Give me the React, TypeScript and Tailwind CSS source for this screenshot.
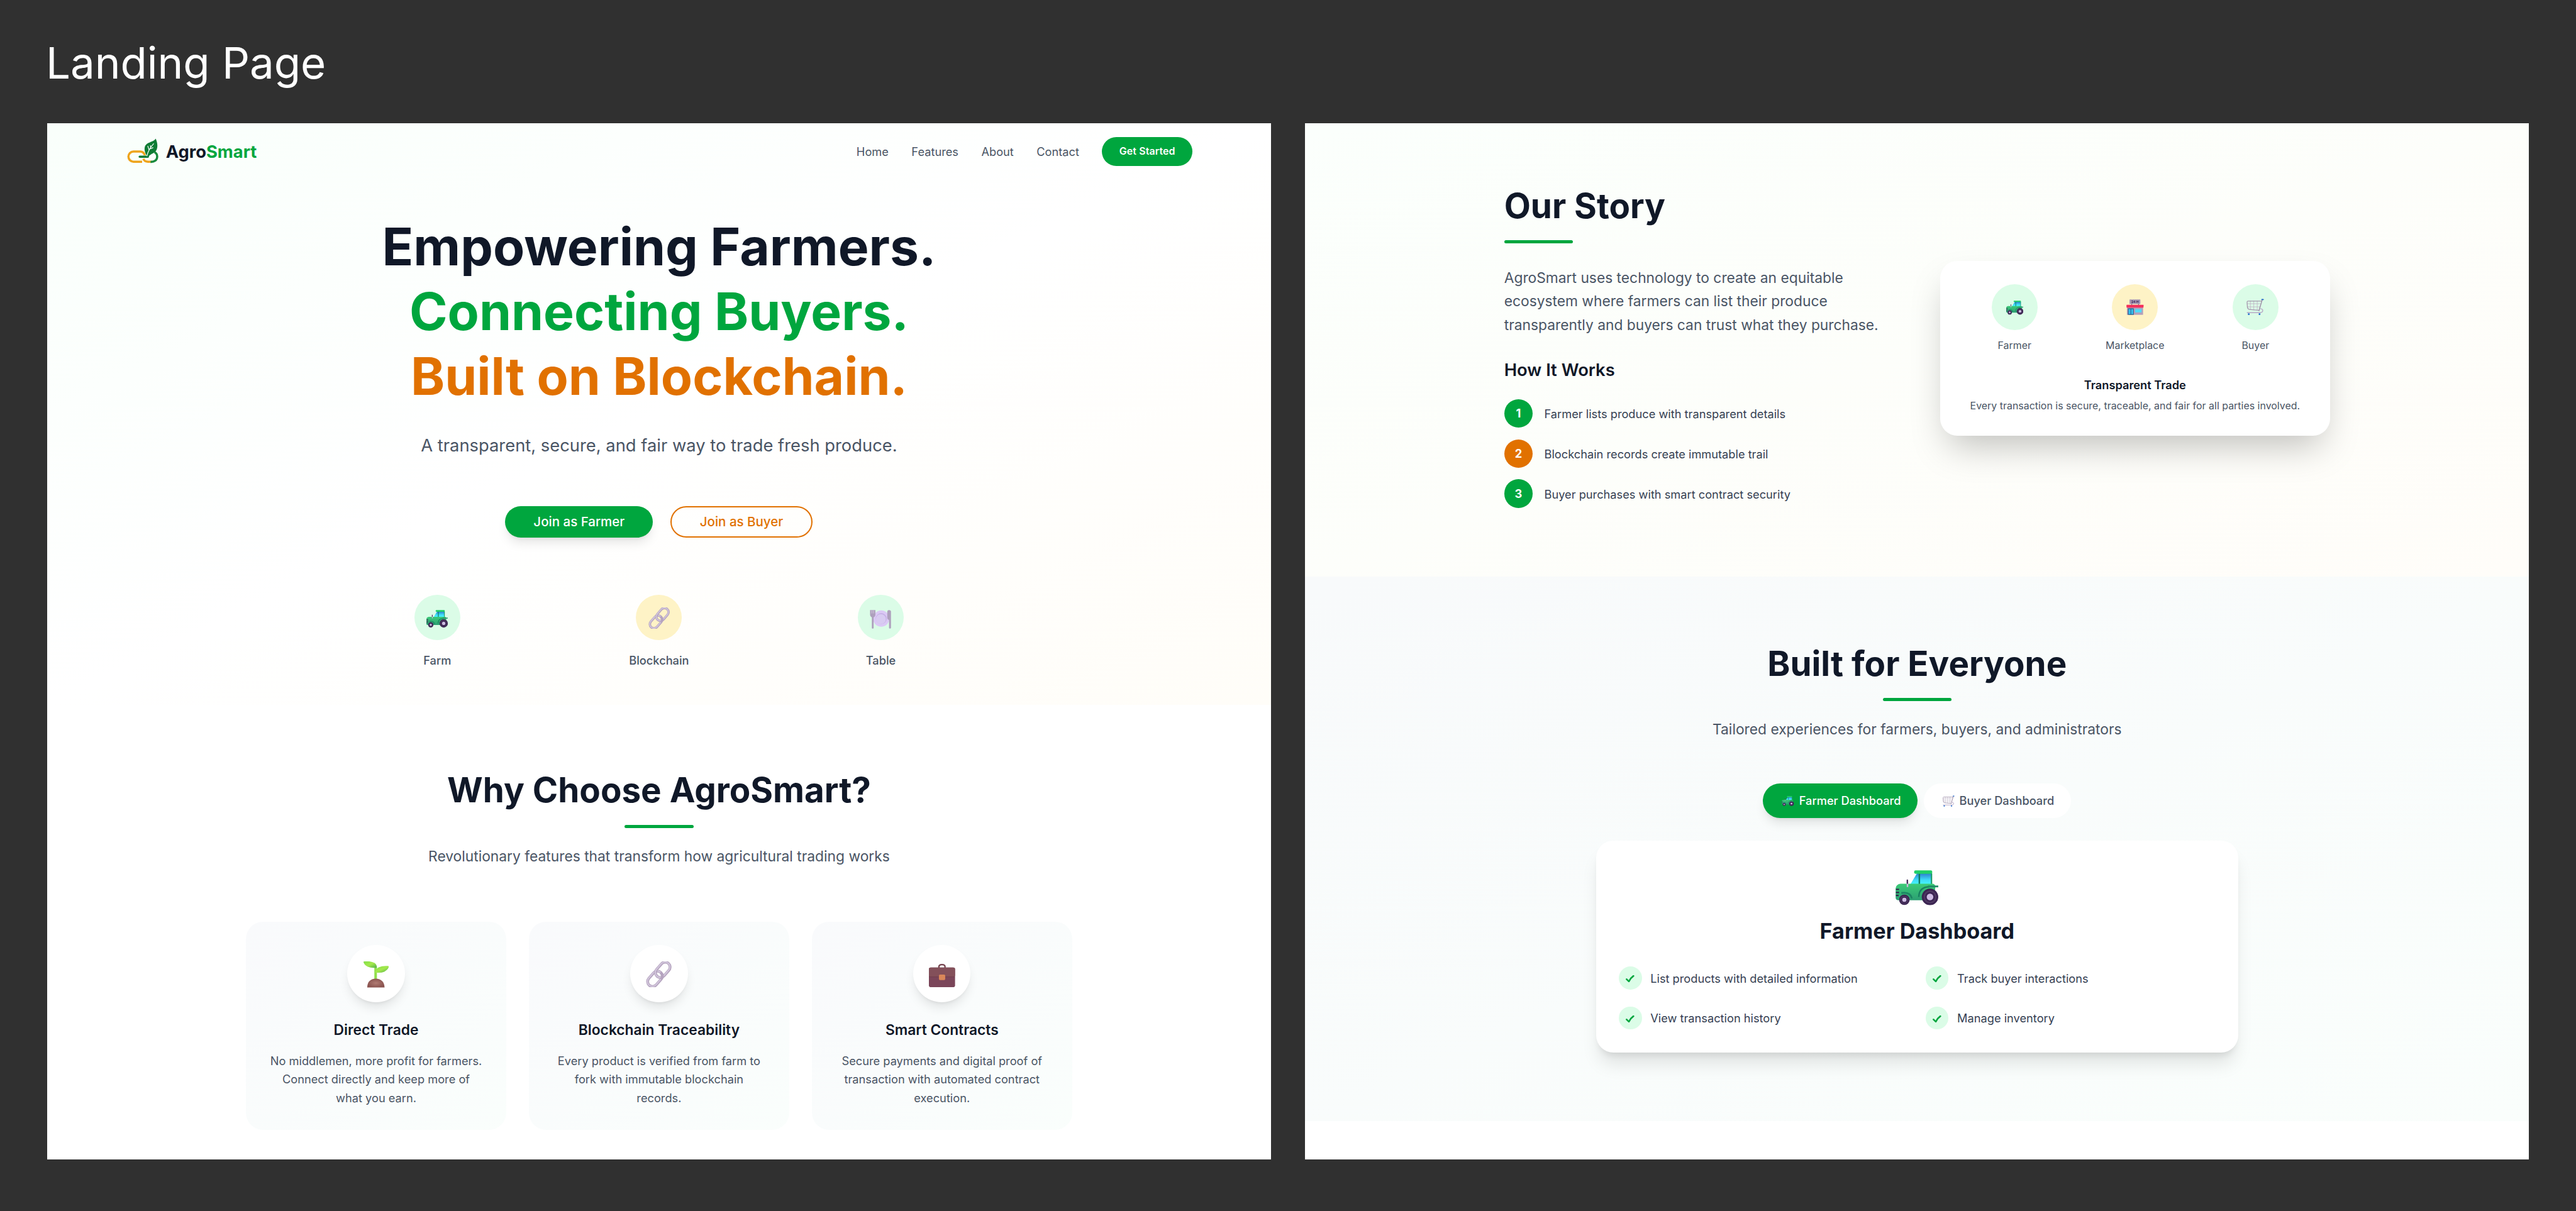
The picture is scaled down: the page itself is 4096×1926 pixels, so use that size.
import React from "react";

type IconProps = { className?: string };

function Tractor({ className }: IconProps) {
  return (
    <svg viewBox="64 74 285 234" className={className} aria-hidden="true">
      <defs>
        <linearGradient id="tr-glass" x1="0" y1="0" x2="0" y2="1">
          <stop offset="0" stopColor="#2c7fd0" />
          <stop offset="0.6" stopColor="#3fdcf8" />
          <stop offset="1" stopColor="#46f5ff" />
        </linearGradient>
        <linearGradient id="tr-body" x1="0" y1="0" x2="0" y2="1">
          <stop offset="0" stopColor="#3ccb78" />
          <stop offset="1" stopColor="#2b9f72" />
        </linearGradient>
      </defs>
      <path d="M206 95H305V168H162Z" fill="url(#tr-glass)" />
      <path d="M222 95V170" stroke="#10795f" strokeWidth="10" />
      <path d="M303 95V170" stroke="#189a66" strokeWidth="9" />
      <rect x="187" y="75" width="121" height="23" rx="10" fill="#20cf68" />
      <path d="M96 164H308Q330 164 328 190L322 240L250 274H80Q64 272 64 256V196Q66 168 96 164Z" fill="url(#tr-body)" />
      <path d="M218 252Q220 186 290 184" fill="none" stroke="#187f60" strokeWidth="10" />
      <path d="M280 182H348" stroke="#1f8c66" strokeWidth="12" />
      <path d="M102 226Q162 216 172 262" fill="none" stroke="#1c8563" strokeWidth="12" />
      <path d="M66 202H87M66 222H87M66 242H84" stroke="#33204a" strokeWidth="9" />
      <path d="M143 150V186" stroke="#cdb9dc" strokeWidth="10" />
      <path d="M142 141V160" stroke="#49305f" strokeWidth="10" strokeLinecap="round" />
      <circle cx="293" cy="252" r="55" fill="#3b2452" />
      <circle cx="293" cy="252" r="38" fill="none" stroke="#4f3a62" strokeWidth="9" />
      <circle cx="293" cy="252" r="22" fill="#cdbbe2" />
      <circle cx="122" cy="271" r="35" fill="#3b2452" />
      <circle cx="122" cy="271" r="24" fill="none" stroke="#4f3a62" strokeWidth="5" />
      <circle cx="122" cy="271" r="14" fill="#cdbbe2" />
    </svg>
  );
}

function ChainLink({ className }: IconProps) {
  return (
    <svg viewBox="0 0 30 30" className={className} aria-hidden="true">
      <g transform="rotate(-49 15 15)" fill="none">
        <rect x="-1.9" y="9.4" width="20" height="11.4" rx="5.7" stroke="#b5a4bf" strokeWidth="3.3" />
        <rect x="-1.9" y="9.1" width="20" height="11.4" rx="5.7" stroke="#d2c6dc" strokeWidth="1.5" />
        <rect x="11.9" y="9.4" width="20" height="11.4" rx="5.7" stroke="#b5a4bf" strokeWidth="3.3" />
        <rect x="11.9" y="9.1" width="20" height="11.4" rx="5.7" stroke="#d2c6dc" strokeWidth="1.5" />
        <path d="M12.4 20.700Q18.100 20.700 18.100 15" stroke="#b5a4bf" strokeWidth="3" />
      </g>
    </svg>
  );
}

function Plate({ className }: IconProps) {
  return (
    <svg viewBox="0 0 60 54" className={className} aria-hidden="true">
      <circle cx="32" cy="24.5" r="23" fill="#dbc9f5" />
      <circle cx="32" cy="24.5" r="15.5" fill="#c6b0e6" />
      <circle cx="31" cy="26" r="14" fill="#d8cbf1" />
      <path d="M0.5 0.5H15.5V14Q15.5 19 10.5 21.5V51.5Q8 54.500 5.500 51.500V21.500Q0.500 19 0.500 14Z" fill="#aea0bd" />
      <path d="M5.500 1V10M10.500 1V10" stroke="#d9cfe4" strokeWidth="1.500" />
      <path d="M54 0.500Q59.500 0.500 59.500 5V51Q57 54.500 54 51.500V28Q49 28 49 20V6Q49 0.500 54 0.500Z" fill="#aea0bd" />
    </svg>
  );
}

function Sprout({ className }: IconProps) {
  return (
    <svg viewBox="475 786 90 97" preserveAspectRatio="none" className={className} aria-hidden="true">
      <defs>
        <linearGradient id="sp-leaf" x1="0" y1="0" x2="1" y2="1">
          <stop offset="0" stopColor="#7fe04a" />
          <stop offset="0.500" stopColor="#a5e84c" />
          <stop offset="1" stopColor="#4fae4c" />
        </linearGradient>
        <radialGradient id="sp-soil">
          <stop offset="0" stopColor="#b07a72" />
          <stop offset="1" stopColor="#8b5450" />
        </radialGradient>
      </defs>
      <path d="M513 808H522V854H513Z" fill="#90df4b" />
      <path d="M475 789Q474 786 479 786Q501 784 514 792Q522 798 522 809Q503 812 490 806Q477 799 475 789Z" fill="url(#sp-leaf)" />
      <path d="M564 806Q566 803 560 803Q541 802 528 808Q517 814 516 827Q537 829 548 824Q561 817 564 806Z" fill="url(#sp-leaf)" />
      <path d="M488 882Q489 851 518 850Q547 851 549 882Z" fill="url(#sp-soil)" />
    </svg>
  );
}

function Briefcase({ className }: IconProps) {
  return (
    <svg viewBox="0 0 73 65" className={className} aria-hidden="true">
      <path d="M28 12V8Q28 2 36.500 2Q45 2 45 8V12" fill="none" stroke="#74424d" strokeWidth="4" />
      <rect x="0" y="10" width="73" height="55" rx="5" fill="#7a4559" />
      <path d="M5 10H68Q73 10 73 15V33Q71 37 66 37H7Q2 37 0 33V15Q0 10 5 10Z" fill="#83505a" />
      <path d="M1 36H72" stroke="#6f3d4c" strokeWidth="1.500" />
      <rect x="28" y="30" width="17.500" height="15" rx="3" fill="#d98659" />
    </svg>
  );
}

function Shop({ className }: IconProps) {
  return (
    <svg viewBox="95 95 115 104" className={className} aria-hidden="true">
      <path d="M131 124V134M176 124V134" stroke="#6b5777" strokeWidth="5" />
      <rect x="116" y="96" width="72" height="30" rx="3" fill="#a796b5" />
      <text x="152" y="119" textAnchor="middle" fontSize="22" fontWeight="700" fontFamily="Inter, sans-serif" fill="#3e2658">
        24 H
      </text>
      <rect x="99" y="146" width="107" height="52" fill="#b3a1bb" />
      <rect x="96" y="131" width="113" height="19" rx="3" fill="#f5305a" />
      <rect x="106" y="155" width="38" height="43" fill="#28507c" />
      <path d="M110 160H123V194H110ZM127 160H140V194H127Z" fill="#35c3f3" />
      <rect x="153" y="160" width="43" height="22" fill="#4fdcfa" />
    </svg>
  );
}

function Cart({ className }: IconProps) {
  return (
    <svg viewBox="896 94 117 112" className={className} aria-hidden="true">
      <g fill="none" strokeLinecap="round">
        <path d="M922 110V168M945 110V170M968 110V172M900 128H990M900 149H985" stroke="#bfb2c5" strokeWidth="3.500" />
        <path d="M997 110H905Q899 111 900 120L903 154Q905 165 916 166L981 173" stroke="#a698ae" strokeWidth="5.500" />
        <path d="M1002 100L980 174" stroke="#9c8da5" strokeWidth="6" />
        <path d="M988 161Q1006 163 1005 174Q1004 187 990 188H901" stroke="#b7a8c6" strokeWidth="6" />
        <path d="M999 100H1009" stroke="#2168c8" strokeWidth="7" />
      </g>
      <rect x="906" y="192" width="11" height="12" rx="2" fill="#2870cf" />
      <rect x="978" y="192" width="11" height="12" rx="2" fill="#2870cf" />
    </svg>
  );
}

function Logo({ className }: IconProps) {
  return (
    <svg viewBox="58 50 209 165" className={className} aria-hidden="true">
      <g fill="none" strokeWidth="14.500">
        <path d="M176 162C170 145 160 138 146 138H100A33 33.500 0 0 0 100 205H158" stroke="#eea41c" />
        <path d="M166 186C172 200 182 205 196 205H222" stroke="#eea41c" />
        <path d="M214 206C240 207 258 194 258 172C258 158 252 148 240 142" stroke="#178a3c" />
        <path d="M142 172H196" stroke="#0f7a34" strokeLinecap="round" />
      </g>
      <path d="M248 52C262 82 264 116 248 136C235 151 214 153 197 175L184 158C170 128 170 100 190 86C212 72 236 72 248 52Z" fill="#0f7c35" />
      <path d="M190 166C196 140 208 114 234 86M203 124L196 102M206 122L230 112M214 110L213 98" fill="none" stroke="#fbfffc" strokeWidth="5" strokeLinecap="round" />
    </svg>
  );
}

function Tick() {
  return (
    <svg viewBox="0 0 12 10" className="mt-[3px] h-[10px] w-[12px]" aria-hidden="true">
      <path d="M1.200 5.600L4.400 8.700Q6.500 4 10.800 1" fill="none" stroke="#00a63e" strokeWidth="2.300" strokeLinejoin="round" strokeLinecap="round" />
    </svg>
  );
}

const navLinks = ["Home", "Features", "About", "Contact"];

const journey = [
  { label: "Farm", tint: "bg-green-100", icon: <Tractor className="mt-[3px] h-[24.8px] w-[30px]" /> },
  { label: "Blockchain", tint: "bg-amber-100", icon: <ChainLink className="mt-[2px] h-[30px] w-[30px]" /> },
  { label: "Table", tint: "bg-green-100", icon: <Plate className="mt-[5px] h-[26.700px] w-[30px]" /> },
];

const features = [
  {
    title: "Direct Trade",
    lines: ["No middlemen, more profit for farmers.", "Connect directly and keep more of", "what you earn."],
    icon: <Sprout className="mt-[2px] h-[36.700px] w-[35.800px]" />,
  },
  {
    title: "Blockchain Traceability",
    lines: ["Every product is verified from farm to", "fork with immutable blockchain", "records."],
    icon: <ChainLink className="mt-[2px] h-[36px] w-[36px]" />,
  },
  {
    title: "Smart Contracts",
    lines: ["Secure payments and digital proof of", "transaction with automated contract", "execution."],
    icon: <Briefcase className="mt-[6px] h-[32.500px] w-[36.500px]" />,
  },
];

const steps = [
  { n: "1", tint: "bg-green-600", text: "Farmer lists produce with transparent details" },
  { n: "2", tint: "bg-amber-600", text: "Blockchain records create immutable trail" },
  { n: "3", tint: "bg-green-600", text: "Buyer purchases with smart contract security" },
];

const parties = [
  { label: "Farmer", tint: "bg-green-100", icon: <Tractor className="mt-[2px] h-[19.800px] w-[24px]" /> },
  { label: "Marketplace", tint: "bg-amber-100", icon: <Shop className="h-[21.900px] w-[24.200px]" /> },
  { label: "Buyer", tint: "bg-green-100", icon: <Cart className="h-[23.300px] w-[24.400px]" /> },
];

const perks = [
  "List products with detailed information",
  "Track buyer interactions",
  "View transaction history",
  "Manage inventory",
];

function SectionHeading({ title, text }: { title: string; text: string }) {
  return (
    <div className="flex flex-col items-center text-center">
      <h2 className="text-5xl leading-none font-bold text-gray-900">{title}</h2>
      <div className="mt-[24.500px] h-1 w-24 rounded-full bg-green-600" />
      <p className="mt-[24.500px] -mb-px translate-y-px text-xl leading-7 text-gray-600">{text}</p>
    </div>
  );
}

function HomePanel() {
  return (
    <div className="h-[1446px] w-[1707px] shrink-0 overflow-hidden bg-white [zoom:1.13993]">
      <section className="h-[812px] bg-linear-to-br from-[#f9fffb] via-white to-[#fffdf8]">
        <nav className="mx-auto flex h-20 w-[1488px] items-center justify-between">
          <div className="flex items-center">
            <Logo className="ml-[1.500px] mb-[2px] h-[34.700px] w-[44px]" />
            <span className="ml-[10.500px] translate-y-[0.500px] text-2xl font-bold text-gray-900">
              Agro<span className="text-green-600">Smart</span>
            </span>
          </div>
          <div className="flex items-center gap-8">
            {navLinks.map((l) => (
              <span key={l} className="translate-y-px text-base text-gray-600">
                {l}
              </span>
            ))}
            <button className="h-10 rounded-full bg-green-600 px-6 text-sm font-semibold tracking-[0.1px] text-white">
              Get Started
            </button>
          </div>
        </nav>
        <div className="flex flex-col items-center pt-12 text-center">
          <h1 className="text-7xl leading-tight font-bold text-gray-900">
            Empowering Farmers.
            <br />
            <span className="text-green-600">Connecting Buyers.</span>
            <br />
            <span className="text-amber-600">Built on Blockchain.</span>
          </h1>
          <p className="mt-[33.500px] text-2xl leading-relaxed text-gray-600">
            A transparent, secure, and fair way to trade fresh produce.
          </p>
          <div className="mt-16 flex gap-6">
            <button className="h-11 w-[206px] rounded-full bg-green-600 text-lg leading-7 font-medium text-white shadow-lg">
              Join as Farmer
            </button>
            <button className="h-11 w-[199px] rounded-full border-2 border-amber-600 text-lg leading-7 font-medium text-amber-600">
              Join as Buyer
            </button>
          </div>
          <div className="mt-[79.500px] grid w-[896px] grid-cols-3 gap-8">
            {journey.map((j) => (
              <div key={j.label} className="flex flex-col items-center">
                <div className={`flex h-16 w-16 items-center justify-center rounded-full ${j.tint}`}>{j.icon}</div>
                <span className="mt-[16.500px] text-base font-medium text-gray-600">{j.label}</span>
              </div>
            ))}
          </div>
        </div>
      </section>

      <section className="bg-white pt-[95px]">
        <SectionHeading
          title="Why Choose AgroSmart?"
          text="Revolutionary features that transform how agricultural trading works"
        />
        <div className="mx-auto mt-20 grid w-[1152px] grid-cols-3 gap-8">
          {features.map((f) => (
            <div
              key={f.title}
              className="flex flex-col items-center rounded-3xl bg-linear-to-br from-[#f9fafc] to-[#fafefc] p-8 text-center"
            >
              <div className="flex h-20 w-20 items-center justify-center rounded-full bg-white shadow-lg">{f.icon}</div>
              <h3 className="mt-6 translate-y-px text-xl leading-7 font-semibold text-gray-900">{f.title}</h3>
              <p className="mt-4 translate-y-px text-base leading-relaxed whitespace-nowrap text-gray-600">
                {f.lines.map((line) => (
                  <span key={line} className="block">
                    {line}
                  </span>
                ))}
              </p>
            </div>
          ))}
        </div>
      </section>
    </div>
  );
}

function StoryPanel() {
  return (
    <div className="h-[1446px] w-[1707px] shrink-0 overflow-hidden bg-white [zoom:1.13993]">
      <section className="h-[633px] bg-linear-to-br from-[#fbfffc] to-[#fffdf9] pt-[92px]">
        <div className="mx-auto grid w-[1152px] grid-cols-2 items-center gap-16">
          <div>
            <h2 className="text-5xl leading-none font-bold text-gray-900">Our Story</h2>
            <div className="mt-6 h-1 w-24 rounded-full bg-green-600" />
            <p className="mt-8 text-xl leading-relaxed whitespace-nowrap text-gray-600">
              AgroSmart uses technology to create an equitable
              <br />
              ecosystem where farmers can list their produce
              <br />
              transparently and buyers can trust what they purchase.
            </p>
            <h3 className="mt-8 text-2xl leading-8 font-semibold text-gray-900">How It Works</h3>
            <div className="mt-6 flex flex-col gap-4">
              {steps.map((s) => (
                <div key={s.n} className="flex items-center gap-4">
                  <div
                    className={`flex h-10 w-10 items-center justify-center rounded-full text-base font-bold text-white ${s.tint}`}
                  >
                    {s.n}
                  </div>
                  <span className="translate-y-[0.500px] text-base text-gray-700">{s.text}</span>
                </div>
              ))}
            </div>
          </div>
          <div className="rounded-3xl bg-white p-8 text-center shadow-2xl">
            <div className="grid grid-cols-3 gap-6">
              {parties.map((p) => (
                <div key={p.label} className="flex flex-col items-center">
                  <div className={`flex h-16 w-16 items-center justify-center rounded-full ${p.tint}`}>{p.icon}</div>
                  <span className="mt-3 translate-y-px text-sm leading-5 text-gray-600">{p.label}</span>
                </div>
              ))}
            </div>
            <h4 className="mt-8 translate-y-px text-base leading-6 font-semibold text-gray-900">Transparent Trade</h4>
            <p className="mt-2 translate-y-px text-sm leading-5 whitespace-nowrap text-gray-600">
              Every transaction is secure, traceable, and fair for all parties involved.
            </p>
          </div>
        </div>
      </section>

      <section className="h-[760px] bg-linear-to-br from-[#f8fafb] to-[#fafefc] pt-[97px]">
        <SectionHeading title="Built for Everyone" text="Tailored experiences for farmers, buyers, and administrators" />
        <div className="mt-16 flex justify-center gap-2">
          <button className="flex h-12 w-[216px] items-center rounded-full bg-green-600 pl-6 text-base font-medium text-white shadow-lg">
            <Tractor className="mr-[7px] ml-[2.500px] h-[14px] w-[17px]" />
            Farmer Dashboard
          </button>
          <button className="flex h-12 w-[206px] items-center rounded-full bg-white pl-6 text-base font-medium text-gray-600">
            <Cart className="mr-[7px] ml-[2.500px] h-[16px] w-[16.500px]" />
            Buyer Dashboard
          </button>
        </div>
        <div className="mx-auto mt-[31px] flex w-[896px] flex-col items-center rounded-3xl bg-white p-8 shadow-xl">
          <div className="flex h-[60px] items-end pb-[1.500px]">
            <Tractor className="h-[49px] w-[60px]" />
          </div>
          <h3 className="mt-4 text-3xl leading-9 font-bold text-gray-900">Farmer Dashboard</h3>
          <div className="mt-8 grid w-full grid-cols-2 gap-6">
            {perks.map((p) => (
              <div key={p} className="flex items-center gap-3">
                <div className="flex h-8 w-8 items-center justify-center rounded-full bg-green-100">
                  <Tick />
                </div>
                <span className="translate-y-[0.500px] text-base text-gray-700">{p}</span>
              </div>
            ))}
          </div>
        </div>
      </section>
    </div>
  );
}

export default function App() {
  return (
    <div className="h-[1926px] w-[4096px] overflow-hidden bg-[#303030] font-[Inter,sans-serif]">
      <header className="flex h-[195.500px] items-start pt-[58px] pl-[73px]">
        <h1 className="text-[69px] leading-[84px] font-normal text-white">Landing Page</h1>
      </header>
      <main className="flex gap-[54.500px] pl-[75px]">
        <HomePanel />
        <StoryPanel />
      </main>
    </div>
  );
}
